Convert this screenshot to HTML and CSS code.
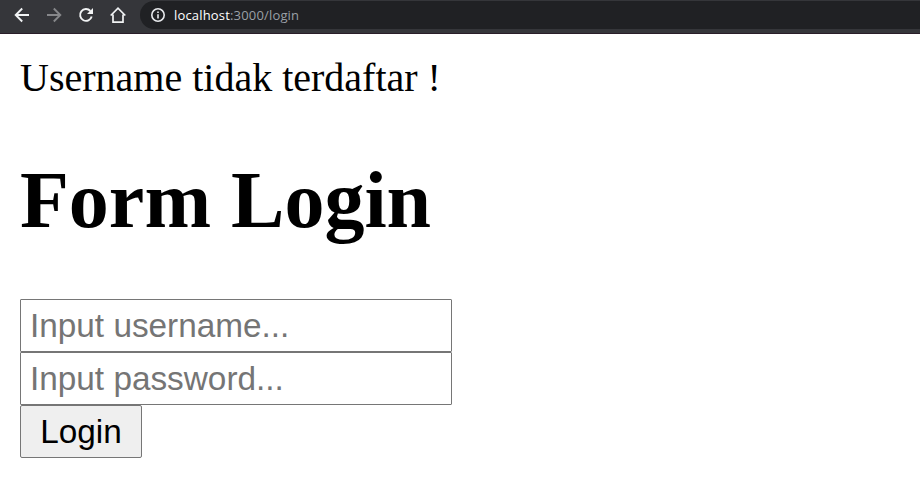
FILE: index.html
```html
<!DOCTYPE html>
<html lang="id">
<head>
<meta charset="utf-8">
<title>Form Login</title>
<link rel="stylesheet" href="styles.css">
</head>
<body>
<header class="toolbar">
  <nav class="nav">
    <svg class="icon" viewBox="0 0 16 16"><path d="M15 8H2M8.200 1.500L1.700 8l6.500 6.500"/></svg>
    <svg class="icon icon-off" viewBox="0 0 16 16"><path d="M1 8h13M7.800 1.500L14.300 8l-6.500 6.500"/></svg>
    <svg class="icon" viewBox="0 0 16 16"><path d="M13.700 9.500A5.900 5.900 0 1 1 12.400 4"/><path class="solid" d="M15 1v6H9z"/></svg>
    <svg class="icon icon-home" viewBox="0 0 16 16"><path d="M.7 8.500L8 1.200l7.300 7.300M3 7.500v7.700h10V7.500"/></svg>
  </nav>
  <div class="omnibox">
    <svg class="info" viewBox="0 0 14 14"><circle cx="7" cy="7" r="6.200"/><path d="M7 6.200v4.300M7 3.400v1.600"/></svg>
    <span class="url"><span class="host">localhost</span>:3000/login</span>
  </div>
</header>
<main class="page">
  <div class="message">Username tidak terdaftar !</div>
  <h1 class="title">Form Login</h1>
  <form class="form">
    <input class="field" type="text" placeholder="Input username...">
    <input class="field" type="password" placeholder="Input password...">
    <button class="submit" type="button">Login</button>
  </form>
</main>
</body>
</html>
```
FILE: styles.css
```css
* { box-sizing: border-box; }
body {
  margin: 0;
  background: #fff;
  color: #000;
  font-family: "Liberation Serif", serif;
  overflow: hidden;
}
.toolbar {
  display: flex;
  align-items: flex-start;
  height: 34px;
  padding: 1px 0 0 14px;
  background: #35363a;
  border-bottom: 1px solid #291e29;
}
.nav {
  display: flex;
  gap: 16px;
  width: 126px;
  padding-top: 6px;
}
.icon {
  width: 16px;
  height: 16px;
  fill: none;
  stroke: #f1f3f4;
  stroke-width: 1.9;
}
.icon-off { stroke: #86878a; }
.icon-home { stroke-width: 1.7; }
.solid { fill: #f1f3f4; stroke: none; }
.omnibox {
  display: flex;
  align-items: center;
  flex: 1;
  height: 28px;
  padding-left: 11px;
  background: #202124;
  border-radius: 14px 0 0 14px;
}
.info {
  width: 14px;
  height: 14px;
  fill: none;
  stroke: #e8eaed;
  stroke-width: 1.6;
}
.url {
  margin-left: 9px;
  color: #9aa0a6;
  font: 13px/18px "Open Sans", sans-serif;
  letter-spacing: 0.17px;
}
.host { color: #fff; }
.page { padding: 21px 20px 20px; }
.message {
  font-size: 40px;
  line-height: 46px;
}
.title {
  margin: 53px 0 52px;
  font-size: 80px;
  line-height: 93px;
  font-weight: bold;
}
.form {
  display: flex;
  flex-direction: column;
  align-items: flex-start;
}
.field, .submit {
  height: 53px;
  margin: 0;
  border: 1px solid #767676;
  font: 33.333px "Liberation Sans", sans-serif;
}
.field {
  width: 432px;
  padding: 0 9px;
  background: #fff;
  border-radius: 1px;
}
.field::placeholder { color: #757575; }
.submit {
  width: 122px;
  padding: 0;
  background: #efefef;
  border-radius: 2px;
  color: #000;
}
```
